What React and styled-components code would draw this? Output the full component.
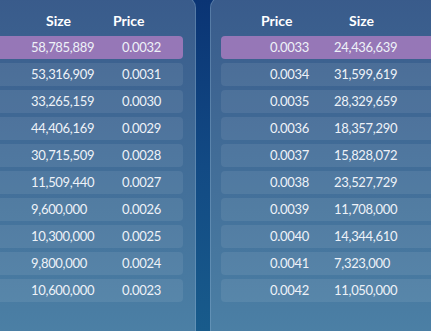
import React from 'react';
import styled, { createGlobalStyle } from 'styled-components';

const bids = [
  ['58,785,889', '0.0032'],
  ['53,316,909', '0.0031'],
  ['33,265,159', '0.0030'],
  ['44,406,169', '0.0029'],
  ['30,715,509', '0.0028'],
  ['11,509,440', '0.0027'],
  ['9,600,000', '0.0026'],
  ['10,300,000', '0.0025'],
  ['9,800,000', '0.0024'],
  ['10,600,000', '0.0023'],
];

const asks = [
  ['0.0033', '24,436,639'],
  ['0.0034', '31,599,619'],
  ['0.0035', '28,329,659'],
  ['0.0036', '18,357,290'],
  ['0.0037', '15,828,072'],
  ['0.0038', '23,527,729'],
  ['0.0039', '11,708,000'],
  ['0.0040', '14,344,610'],
  ['0.0041', '7,323,000'],
  ['0.0042', '11,050,000'],
];

const GlobalStyle = createGlobalStyle`
  html, body {
    margin: 0;
    height: 100%;
    overflow: hidden;
  }
  body {
    background: linear-gradient(180deg, #0a3474 0%, #124a84 50%, #185b8b 100%);
    font-family: Lato, "Open Sans", sans-serif;
  }
`;

const Board = styled.div`
  display: flex;
  gap: 14px;
  height: 100vh;
`;

// order book side; the left one is clipped by the window edge
const Panel = styled.section`
  flex: none;
  box-sizing: border-box;
  width: ${p => p.$width}px;
  margin-left: ${p => p.$offset || 0}px;
  margin-top: -4px;
  height: calc(100vh + 20px);
  padding: 4px 12px 0 ${p => p.$padLeft}px;
  border-radius: 12px;
  border: 1px solid rgba(140, 180, 215, 0.35);
  background: linear-gradient(180deg, #395b8b 0%, #416c97 45%, #4c81a6 100%);
`;

const Header = styled.div`
  display: grid;
  grid-template-columns: ${p => p.$first}px auto;
  padding: 11px 0 0 ${p => p.$indent}px;
  height: 35px;
  box-sizing: border-box;
  color: #ffffff;
  font-weight: 700;
  font-size: 14px;
  line-height: 18px;
`;

const Rows = styled.div`
  display: flex;
  flex-direction: column;
  gap: 4px;
`;

const Row = styled.div`
  display: grid;
  grid-template-columns: ${p => p.$first}px auto;
  padding-left: ${p => p.$indent}px;
  height: 23px;
  line-height: 23px;
  border-radius: 4px;
  font-size: 13px;
  letter-spacing: -0.3px;
  color: #eef2f8;
  background: ${p => (p.$active ? '#9677b7' : 'rgba(255, 255, 255, 0.08)')};
`;

const App = () => (
  <>
    <GlobalStyle />
    <Board>
      <Panel $width={216} $offset={-20} $padLeft={11}>
        <Header $first={67} $indent={54}>
          <span>Size</span>
          <span>Price</span>
        </Header>
        <Rows>
          {bids.map(([size, price], i) => (
            <Row key={price} $first={91} $indent={39} $active={i === 0}>
              <span>{size}</span>
              <span>{price}</span>
            </Row>
          ))}
        </Rows>
      </Panel>
      <Panel $width={260} $padLeft={10}>
        <Header $first={88} $indent={40}>
          <span>Price</span>
          <span>Size</span>
        </Header>
        <Rows>
          {asks.map(([price, size], i) => (
            <Row key={price} $first={64} $indent={49} $active={i === 0}>
              <span>{price}</span>
              <span>{size}</span>
            </Row>
          ))}
        </Rows>
      </Panel>
    </Board>
  </>
);

export default App;
